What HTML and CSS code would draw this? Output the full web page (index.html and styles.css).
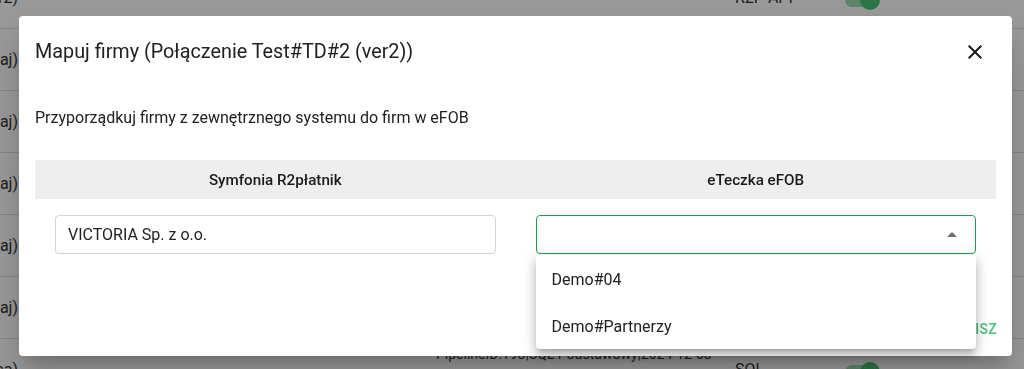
FILE: index.html
```html
<!DOCTYPE html>
<html lang="pl">

<head>
    <meta charset="UTF-8">
    <meta name="viewport" content="width=device-width, initial-scale=1.0">
    <title>Mapuj firmy</title>
    <link rel="stylesheet" href="styles.css">
</head>

<body>

    <div class="page">
        <div class="list">
            <div class="row">
                <div class="c-name"><span>Test#TD#2 (ver2)</span></div>
                <div class="c-desc"></div>
                <div class="c-type">R2P API</div>
                <div class="c-active"><span class="switch"></span></div>
            </div>
            <div class="row">
                <div class="c-name"><span>Import (Wysyłaj)</span></div>
                <div class="c-desc"></div>
                <div class="c-type"></div>
                <div class="c-active"></div>
            </div>
            <div class="row">
                <div class="c-name"><span>Import (Wysyłaj)</span></div>
                <div class="c-desc"></div>
                <div class="c-type"></div>
                <div class="c-active"></div>
            </div>
            <div class="row">
                <div class="c-name"><span>Import (Wysyłaj)</span></div>
                <div class="c-desc"></div>
                <div class="c-type"></div>
                <div class="c-active"></div>
            </div>
            <div class="row">
                <div class="c-name"><span>Import (Wysyłaj)</span></div>
                <div class="c-desc"></div>
                <div class="c-type"></div>
                <div class="c-active"></div>
            </div>
            <div class="row">
                <div class="c-name"><span>Import (Wysyłaj)</span></div>
                <div class="c-desc"></div>
                <div class="c-type"></div>
                <div class="c-active"></div>
            </div>
            <div class="row">
                <div class="c-name"><span>Eksport (Kasa)</span></div>
                <div class="c-desc">PipelineID:193|SQL Podstawowy|2024-12-03</div>
                <div class="c-type">SQL</div>
                <div class="c-active"><span class="switch"></span></div>
            </div>
        </div>
    </div>

    <div class="backdrop"></div>

    <div class="dialog">
        <div class="dialog-head">
            <h2 class="dialog-title">Mapuj firmy (Połączenie Test#TD#2 (ver2))</h2>
            <button class="close" title="Zamknij">
                <svg viewBox="0 0 24 24" width="24" height="24">
                    <path d="M19 6.41 17.59 5 12 10.59 6.41 5 5 6.41 10.59 12 5 17.59 6.41 19 12 13.41 17.59 19 19 17.59 13.41 12z" />
                </svg>
            </button>
        </div>

        <div class="dialog-body">
            <p class="lead">Przyporządkuj firmy z zewnętrznego systemu do firm w eFOB</p>

            <div class="map-table">
                <div class="map-head">
                    <div class="map-cell">Symfonia R2płatnik</div>
                    <div class="map-cell">eTeczka eFOB</div>
                </div>
                <div class="map-row">
                    <div class="map-cell">
                        <input type="text" class="field" value="VICTORIA Sp. z o.o." readonly>
                    </div>
                    <div class="map-cell">
                        <div class="select open">
                            <span class="arrow"></span>
                            <ul class="menu">
                                <li>Demo#04</li>
                                <li>Demo#Partnerzy</li>
                            </ul>
                        </div>
                    </div>
                </div>
            </div>
        </div>

        <div class="dialog-foot">
            <button class="save">Zapisz</button>
        </div>
    </div>

</body>

</html>
```

FILE: styles.css
```css
body {
    margin: 0;
    font-family: Roboto, "Noto Sans", sans-serif;
    background-color: #fff;
    color: #212121;
    overflow: hidden;
}

/* page behind the dialog */
.list {
    margin-top: -33px;
}

.row {
    display: flex;
    align-items: center;
    height: 61px;
    border-bottom: 1px solid #e0e0e0;
    font-size: 16px;
    color: #333;
}

.c-name {
    width: 18px;
    display: flex;
    justify-content: flex-end;
    white-space: nowrap;
}

.c-desc {
    width: 299px;
    margin-left: 418px;
    font-size: 14px;
    line-height: 20px;
    white-space: nowrap;
    align-self: flex-start;
    margin-top: 5px;
}

.c-type {
    width: 110px;
}

.c-active {
    width: 60px;
    padding-top: 4px;
}

.switch {
    position: relative;
    display: block;
    width: 34px;
    height: 14px;
    border-radius: 7px;
    background: #9fdcb4;
}

.switch::after {
    content: "";
    position: absolute;
    right: -1px;
    top: -3px;
    width: 20px;
    height: 20px;
    border-radius: 50%;
    background: #46c572;
}

.backdrop {
    position: fixed;
    inset: 0;
    background: rgba(0, 0, 0, 0.4);
}

/* dialog */
.dialog {
    position: fixed;
    left: 19px;
    top: 16px;
    width: 993px;
    height: 340px;
    background: #fff;
    border-radius: 4px;
    box-shadow: 0 11px 15px -7px rgba(0, 0, 0, 0.2), 0 24px 38px 3px rgba(0, 0, 0, 0.14);
    display: flex;
    flex-direction: column;
}

.dialog-head {
    display: flex;
    align-items: center;
    justify-content: space-between;
    padding: 22px 25px 0 16px;
}

.dialog-title {
    margin: 0;
    font-size: 19.8px;
    font-weight: 400;
    line-height: 28px;
    color: #212121;
}

.close {
    width: 24px;
    height: 24px;
    padding: 0;
    border: none;
    background: none;
    cursor: pointer;
}

.close svg {
    display: block;
    fill: #1a1a1a;
}

.dialog-body {
    padding: 0 16px;
}

.lead {
    margin: 40px 0 0;
    font-size: 16px;
    line-height: 24px;
}

.map-table {
    margin-top: 30px;
}

.map-head {
    display: flex;
    height: 39px;
    align-items: center;
    background: #eeeeee;
    font-size: 15.2px;
    font-weight: 500;
    color: #1a1a1a;
}

.map-head .map-cell {
    text-align: center;
}

.map-cell {
    flex: 1;
}

.map-row {
    display: flex;
}

.map-row .map-cell {
    padding: 16px 20px 0;
}

.field {
    display: block;
    box-sizing: border-box;
    width: 100%;
    height: 39px;
    padding: 0 12px;
    border: 1px solid #d4d4d4;
    border-radius: 4px;
    font-family: inherit;
    font-size: 16px;
    color: #212121;
    outline: none;
}

.select {
    position: relative;
    box-sizing: border-box;
    height: 39px;
    border: 1px solid #1c9f4b;
    border-radius: 4px;
}

.arrow {
    position: absolute;
    right: 18px;
    top: 16px;
    border-left: 5px solid transparent;
    border-right: 5px solid transparent;
    border-bottom: 5px solid #6e6e6e;
}

.menu {
    position: absolute;
    z-index: 2;
    left: -1px;
    right: -1px;
    top: 39px;
    margin: 0;
    padding: 0;
    list-style: none;
    background: #fff;
    border-radius: 0 0 4px 4px;
    box-shadow: 0 5px 5px -3px rgba(0, 0, 0, 0.2), 0 8px 10px 1px rgba(0, 0, 0, 0.14), 0 3px 14px 2px rgba(0, 0, 0, 0.12);
}

.menu li {
    height: 47px;
    line-height: 49px;
    padding: 0 16px;
    font-size: 16px;
    color: #212121;
}

.dialog-foot {
    margin-top: auto;
    display: flex;
    justify-content: flex-end;
    padding: 0 7px 9px;
}

.save {
    height: 36px;
    padding: 0 8px;
    border: none;
    background: none;
    font-family: inherit;
    font-size: 14px;
    font-weight: 500;
    letter-spacing: 0.3px;
    text-transform: uppercase;
    color: #4cc07a;
    cursor: pointer;
}
```
